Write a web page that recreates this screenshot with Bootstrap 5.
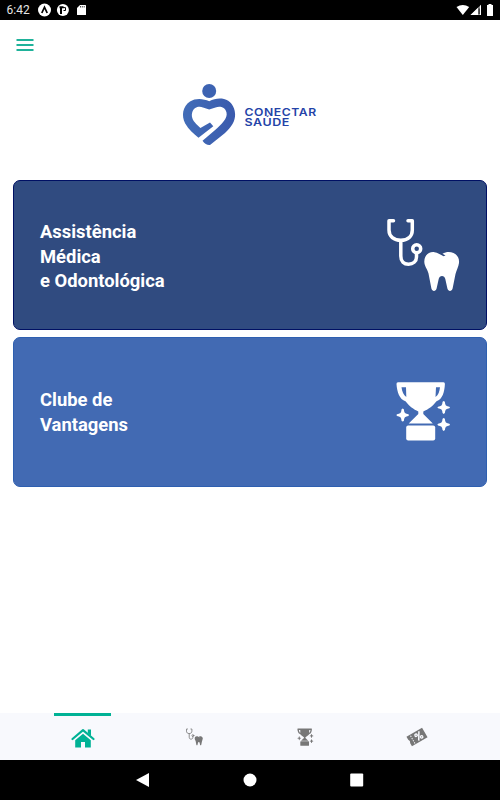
<!DOCTYPE html>
<html lang="pt-BR">
<head>
<meta charset="utf-8">
<meta name="viewport" content="width=device-width, initial-scale=1">
<title>Conectar Saúde</title>
<link href="https://cdn.jsdelivr.net/npm/bootstrap@5.3.0/dist/css/bootstrap.min.css" rel="stylesheet">
<style>
body{font-family:Roboto,"Liberation Sans",sans-serif;background:#fff}
svg{display:block;flex:none}
.screen{width:500px;height:800px;overflow:hidden}
.status{height:20px;background:#000;color:#e6e6e6;font-size:12px;line-height:20px;padding-left:6.5px;padding-right:5px}
.status .clock{width:31.5px}
.topbar{height:50px;padding:18px 16px}
.brand{height:110px;padding-top:10px}
.tiles{padding:0 13px;gap:7px}
.tile{height:150px;border-radius:7px;color:#fff;font-weight:700;font-size:18.4px;line-height:24.7px;padding:4px 26px 0 26px}
.tile-health{background:#304b80;border:1px solid #001064}
.tile-club{background:#426ab3;border:1px solid #2e5fb0;padding-top:2px}
.tile-health svg{margin-top:-5px}
.tile-club svg{margin-top:-4px;margin-right:9px}
.tabs{height:47px;background:#f8f9fd;padding:0 27px;color:#777}
.tab-item{height:47px;color:inherit;background:none}
.tab-item .bar{width:57px;height:2.5px}
.tab-item.current{color:#00b295}
.tab-item.current .bar{background:#00b295}
.sysbar{height:40px;background:#000;padding:0 89px}
</style>
<script src="https://cdn.jsdelivr.net/npm/bootstrap@5.3.0/dist/js/bootstrap.bundle.min.js"></script>
</head>
<body>
<svg width="0" height="0" class="position-absolute" aria-hidden="true">
  <symbol id="health" viewBox="387 218 73 74">
    <g fill="none" stroke="currentColor" stroke-width="3.5" stroke-linecap="round" stroke-linejoin="round">
      <path d="M393.500 220.700H389V230C389 236.500 394 240.300 400.800 240.300S412.300 236.500 412.300 230V220.700H408M400.800 240.500V256C400.800 261.500 404 264.200 408.500 264.200S416.500 261.500 416.500 257V253"/>
      <circle cx="416.700" cy="248.800" r="4"/>
    </g>
    <path fill="currentColor" d="M424.300 261.500C424.500 254.500 429.500 251.500 434.500 252.200C438 252.700 440 254.500 443.500 256.200L445.500 255.500L442.500 253.800C446 251.500 450 251.300 453.500 253C457.500 255 459.500 258.500 459 263C458.500 267 456.500 270 455.500 274L452.600 288.500C451.800 291.700 448.200 291.700 447.400 288.500L445.300 279C444.500 275 439.500 275 438.700 279L436.600 288.500C435.800 291.700 432.200 291.700 431.400 288.500L428.500 273.500C427.500 269 424.200 266 424.300 261.500Z"/>
  </symbol>
  <symbol id="trophy" viewBox="396 381 55 60">
    <g fill="currentColor">
      <path fill-rule="evenodd" d="M398 382.300H443.500Q445 382.300 444.900 384C444.500 392 442.500 399.500 436.500 401.200C432.500 406.500 428.500 409 423.300 411.500V414L432.800 423.500H408.700L418.300 414V411.500C413.500 409 409.500 406.500 405.500 401.200C399.500 399.500 397 392 396.500 384Q396.400 382.300 398 382.300ZM401.500 387.300C402 391.500 403.500 395 406.300 397L406 387.300ZM436 387.300L435.500 397C438.500 395 439.500 391.500 440 387.300Z"/>
      <rect x="406.200" y="425.500" width="29" height="15" rx="2"/>
      <path id="spark" d="M402.700 408.600Q404.200 408.600 404.200 411.500Q404.500 413.500 406.500 413.800Q409 414 409 415.100Q409 416.200 406.500 416.400Q404.500 416.700 404.200 418.700Q404.200 421.600 402.700 421.600Q401.200 421.600 401.200 418.700Q400.900 416.700 398.900 416.400Q396.400 416.200 396.400 415.100Q396.400 414 398.900 413.800Q400.900 413.500 401.200 411.500Q401.200 408.600 402.700 408.600Z"/>
      <use href="#spark" x="41" y="-7.600"/>
      <use href="#spark" x="41" y="9.500"/>
    </g>
  </symbol>
</svg>

<div class="screen d-flex flex-column">
  <header class="status d-flex align-items-center">
    <span class="clock">6:42</span>
    <svg width="50" height="20" viewBox="38 0 50 20">
      <circle cx="44.500" cy="10" r="6.500" fill="#fff"/>
      <path d="M41.800 13L44.500 7.200L47.200 13" fill="none" stroke="#000" stroke-width="1.700"/>
      <circle cx="62.900" cy="10" r="6" fill="#fff"/>
      <path d="M59.500 7.200H63.500M61 6.500V14" stroke="#000" stroke-width="2"/>
      <path d="M62.800 7.600H65.500V10.500H63.500" fill="none" stroke="#000" stroke-width="1"/>
      <path d="M80 5H85.500Q86 5 86 5.600V14.500Q86 15 85.500 15H77.500Q77 15 77 14.500V8Z" fill="#fff"/>
      <path d="M80.500 6V7.500M82.300 6V7.500M84.200 6V7.500" stroke="#000" stroke-width=".7"/>
    </svg>
    <svg class="ms-auto" width="40" height="20" viewBox="455 0 40 20">
      <path d="M456.500 7.100Q462.800 2.800 469.200 7.100L462.800 15Z" fill="#fff"/>
      <path d="M481 4.800V15H470.500Z" fill="#999"/>
      <path d="M478 7.700V15H470.500ZM480 6L481 4.800V15H480Z" fill="#fff"/>
      <path d="M478.300 8.500H480V14H478.300Z" fill="#444"/>
      <path d="M488.500 4H491.500V5H493V15.500Q493 16 492.500 16H487.500Q487 16 487 15.500V5H488.500Z" fill="#fff"/>
    </svg>
  </header>

  <div class="topbar">
    <svg width="18" height="14" viewBox="0 0 18 14" role="img" aria-label="Menu"><path d="M.5 2H17.500M.5 7H17.500M.5 12H17.500" stroke="#1fb29a" stroke-width="1.900"/></svg>
  </div>

  <div class="brand d-flex justify-content-center">
    <svg width="140" height="70" viewBox="180 80 140 70">
      <defs><linearGradient id="blue" x1="0" x2="1"><stop stop-color="#426db8"/><stop offset="1" stop-color="#3a5aad"/></linearGradient></defs>
      <circle cx="209.200" cy="91" r="7" fill="#3d63b2"/>
      <path fill="url(#blue)" d="M209.200 101.300C203.500 98.400 195.500 97.800 190 101.500C182.500 106.500 181.200 116 185.200 123.500C188.500 129.500 194 134 198.500 137.700L213.300 126.200L210 122.500L200.400 128L197.500 125.200C194 121.800 190.700 118 192.200 112.500C194 107 199 106 203 107.500L209.200 109.600L215.500 107.500C220 106 225 107 226.500 112.500C228 118.500 221 124.500 216 129.300L202.500 140.700Q206 145.500 210 145L225 133C231.500 127 235.300 121.500 235.100 114C234.800 106 230 100.500 224 99C219 98 214 98.800 209.200 101.300Z"/>
      <g fill="#2443a8" font-family="Inter,'Liberation Sans',sans-serif" font-weight="600" font-size="10.300" letter-spacing=".5">
        <text x="244.500" y="115.500" textLength="72.300" lengthAdjust="spacingAndGlyphs">CONECTAR</text>
        <text x="244.500" y="126.400" textLength="45.500" lengthAdjust="spacingAndGlyphs">SAÚDE</text>
      </g>
    </svg>
  </div>

  <main class="tiles d-flex flex-column flex-grow-1">
    <section class="tile tile-health d-flex align-items-center justify-content-between">
      <div>Assistência<br>Médica<br>e Odontológica</div>
      <svg width="73" height="74"><use href="#health"/></svg>
    </section>
    <section class="tile tile-club d-flex align-items-center justify-content-between">
      <div>Clube de<br>Vantagens</div>
      <svg width="55" height="60"><use href="#trophy"/></svg>
    </section>
  </main>

  <nav class="tabs row g-0">
    <a class="tab-item current col d-flex flex-column align-items-center" href="#" aria-label="Início">
      <span class="bar"></span>
      <svg class="mt-2" width="24" height="28" viewBox="71 723.500 24 28" fill="currentColor">
        <path d="M72.500 738.500L83 729.700L93.500 738.500" fill="none" stroke="currentColor" stroke-width="2.200" stroke-linecap="round" stroke-linejoin="round"/>
        <path d="M87.800 729H91V735.500L87.800 732.800ZM75.200 739.800L83 733.200L90.800 739.800V747H85V741.500H81V747H75.200Z"/>
      </svg>
    </a>
    <a class="tab-item col d-flex justify-content-center align-items-center" href="#" aria-label="Assistência"><svg width="17" height="18"><use href="#health"/></svg></a>
    <a class="tab-item col d-flex justify-content-center align-items-center" href="#" aria-label="Vantagens"><svg width="17" height="18"><use href="#trophy"/></svg></a>
    <a class="tab-item col d-flex justify-content-center align-items-center" href="#" aria-label="Cupons">
      <svg width="22" height="20" viewBox="406 727 22 20">
        <g transform="rotate(-30 417 737)">
          <path fill="currentColor" d="M408 731.500H426V742.500H408V739Q409.500 737 408 735Z"/>
          <path d="M412 732.800V741.800" stroke="#f8f9fd" stroke-width="1" stroke-dasharray="1.300 1.200"/>
          <path d="M421.500 733L416.700 741" stroke="#f8f9fd" stroke-width="1.500"/>
          <circle cx="417.100" cy="735" r="1.200" fill="none" stroke="#f8f9fd" stroke-width="1.300"/>
          <circle cx="421.100" cy="739.200" r="1.200" fill="none" stroke="#f8f9fd" stroke-width="1.300"/>
        </g>
      </svg>
    </a>
  </nav>

  <footer class="sysbar row g-0 align-items-center" aria-label="Sistema">
    <div class="col d-flex justify-content-center"><svg width="14" height="14" viewBox="0 0 14 14"><path d="M13 0V14L0 7Z" fill="#fff"/></svg></div>
    <div class="col d-flex justify-content-center"><svg width="14" height="14" viewBox="0 0 14 14"><circle cx="7" cy="7" r="6.500" fill="#fff"/></svg></div>
    <div class="col d-flex justify-content-center"><svg width="14" height="14" viewBox="0 0 14 14"><rect x=".2" y=".5" width="13" height="13" rx="1" fill="#fff"/></svg></div>
  </footer>
</div>
</body>
</html>
